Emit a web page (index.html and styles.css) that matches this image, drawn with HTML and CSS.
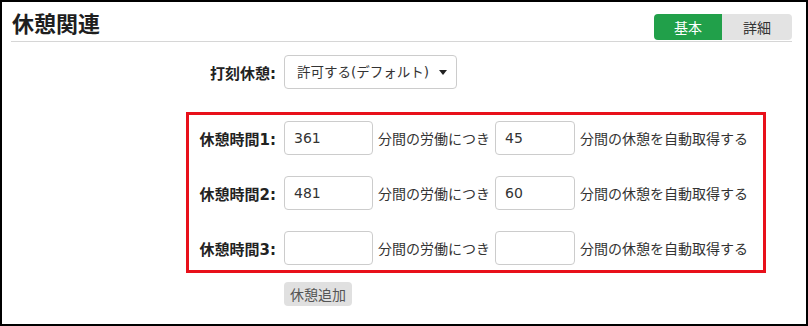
FILE: index.html
```html
<!DOCTYPE html>
<html lang="ja">

<head>
    <meta charset="UTF-8">
    <meta name="viewport" content="width=device-width, initial-scale=1.0">
    <title>休憩関連</title>
    <link rel="stylesheet" href="styles.css">
</head>

<body>
    <div class="frame">
        <div class="section-head">
            <h2 class="head">休憩関連</h2>
            <div class="toggle">
                <span class="toggle-btn on">基本</span>
                <span class="toggle-btn">詳細</span>
            </div>
        </div>

        <div class="form">
            <div class="row plain">
                <label class="label" for="stamp">打刻休憩:</label>
                <div class="select-wrap">
                    <select id="stamp" class="select">
                        <option>許可する(デフォルト)</option>
                        <option>許可しない</option>
                    </select>
                    <span class="arrow"></span>
                </div>
            </div>

            <div class="rest-box">
                <div class="row">
                    <label class="label" for="work1">休憩時間1:</label>
                    <input type="text" class="input wide" id="work1" value="361">
                    <span class="txt">分間の労働につき</span>
                    <input type="text" class="input" value="45">
                    <span class="txt">分間の休憩を自動取得する</span>
                </div>
                <div class="row">
                    <label class="label" for="work2">休憩時間2:</label>
                    <input type="text" class="input wide" id="work2" value="481">
                    <span class="txt">分間の労働につき</span>
                    <input type="text" class="input" value="60">
                    <span class="txt">分間の休憩を自動取得する</span>
                </div>
                <div class="row">
                    <label class="label" for="work3">休憩時間3:</label>
                    <input type="text" class="input wide" id="work3" value="">
                    <span class="txt">分間の労働につき</span>
                    <input type="text" class="input" value="">
                    <span class="txt">分間の休憩を自動取得する</span>
                </div>
            </div>

            <div class="add-row">
                <button class="btn-add">休憩追加</button>
            </div>
        </div>
    </div>
</body>

</html>
```

FILE: styles.css
```css
* {
    padding: 0;
    margin: 0;
    box-sizing: border-box;
}

body {
    font-family: "DejaVu Sans", "Noto Sans CJK JP", sans-serif;
    color: #333;
    background: #fff;
}

.frame {
    width: 808px;
    height: 326px;
    border: 2px solid #000;
    padding: 0 14px 0 9px;
}

.section-head {
    display: flex;
    justify-content: space-between;
    align-items: flex-end;
    height: 40px;
    padding-bottom: 1px;
    border-bottom: 1px solid #d6d6d6;
}

.head {
    font-size: 22px;
    line-height: 30px;
    font-weight: bold;
    color: #1e1e1e;
    padding-left: 1px;
}

.toggle {
    display: flex;
    height: 26px;
    border-radius: 4px;
    overflow: hidden;
    font-size: 14px;
}

.toggle-btn {
    display: flex;
    align-items: center;
    justify-content: center;
    width: 70px;
    background-color: #e3e3e3;
    color: #333;
}

.toggle-btn.on {
    width: 68px;
    background-color: #21a04a;
    color: #fff;
}

.form {
    padding-left: 175px;
    margin-top: 13px;
}

.row {
    display: flex;
    align-items: center;
    font-size: 14px;
}

.row.plain {
    padding-left: 3px;
}

.label {
    width: 87px;
    margin-right: 8px;
    text-align: right;
    font-size: 15px;
    font-weight: bold;
    color: #222;
    white-space: nowrap;
}

.select-wrap {
    position: relative;
}

.select {
    appearance: none;
    width: 173px;
    height: 34px;
    padding: 0 12px;
    border: 1px solid #ccc;
    border-radius: 4px;
    background: #fff;
    font-family: inherit;
    font-size: 13.5px;
    color: #333;
}

.arrow {
    position: absolute;
    right: 10px;
    top: 15px;
    border-left: 4px solid transparent;
    border-right: 4px solid transparent;
    border-top: 5px solid #222;
}

.rest-box {
    display: flex;
    flex-direction: column;
    gap: 21px;
    width: 580px;
    margin-top: 23px;
    padding: 6px 0 5px 0;
    border: 3px solid #e8101a;
}

.input {
    width: 80px;
    height: 34px;
    padding: 0 9px;
    border: 1px solid #ccc;
    border-radius: 4px;
    font-family: inherit;
    font-size: 14px;
    color: #333;
}

.input.wide {
    width: 89px;
}

.txt {
    margin: 0 5px;
    white-space: nowrap;
}

.add-row {
    padding-left: 98px;
    margin-top: 9px;
}

.btn-add {
    width: 68px;
    height: 24px;
    border: none;
    border-radius: 4px;
    background-color: #e0e0e0;
    color: #555;
    font-family: inherit;
    font-size: 14px;
}
```
